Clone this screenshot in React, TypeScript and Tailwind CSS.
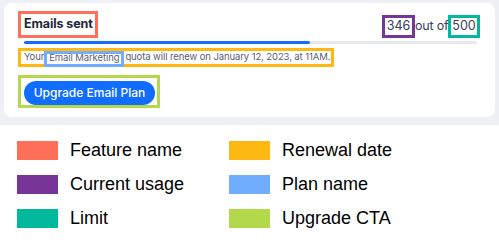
const legend = [
	{ color: 'bg-[#ff6f59]', label: 'Feature name' },
	{ color: 'bg-[#fdb813]', label: 'Renewal date' },
	{ color: 'bg-[#773697]', label: 'Current usage' },
	{ color: 'bg-[#70adff]', label: 'Plan name' },
	{ color: 'bg-[#00b99d]', label: 'Limit' },
	{ color: 'bg-[#b3d84b]', label: 'Upgrade CTA' },
];

export default function App() {
	return (
		<div className="w-[499px] h-[244px] bg-white overflow-hidden">
			<div className="h-[125px] bg-[#eef0f5] pt-[3px] px-[4px] font-['Inter',sans-serif]">
				<div className="h-[114px] w-[491px] rounded-lg bg-white pl-[14px] pr-[15px] pt-[8px]">
					<header className="flex justify-between items-end">
						<span className="h-[27px] w-[80px] flex items-center whitespace-nowrap border-[3px] border-[#ff6f59] pl-[3px] text-[12.5px] font-bold tracking-[-0.1px] text-[#20263a]">
							Emails sent
						</span>
						<div className="flex items-center text-[12.5px] text-[#3b4057]">
							<span className="h-[23px] w-[33px] flex items-center justify-center border-[3px] border-[#773697]">346</span>
							<span className="w-[33px] text-center whitespace-nowrap tracking-[-0.2px]">out of</span>
							<span className="h-[23px] w-[32px] flex items-center justify-center border-[3px] border-[#00b99d]">500</span>
						</div>
					</header>
					<div className="mt-[3px] ml-[6px] mr-[3px] h-[3px] rounded-full bg-[#e7e9ee]">
						<div className="h-full w-[286px] rounded-full bg-[#116dff]" />
					</div>
					<div className="mt-[4px] w-[316px] h-[19px] flex items-center border-[3px] border-[#fdb813] pl-[3px] text-[9.5px] tracking-[-0.1px] text-[#5a6072] whitespace-nowrap">
						Your
						<span className="h-[16px] flex items-center border-[3px] border-[#70adff] px-[2px] mt-[2px] mr-[1px]">Email Marketing</span>
						quota will renew on January 12, 2023, at 11AM.
					</div>
					<div className="mt-[8px] w-[142px] h-[33px] border-[3px] border-[#b3d84b] pl-[3px] pt-[1px]">
						<button className="h-[24px] w-[131px] rounded-full bg-[#116dff] text-white text-[12px] font-medium">
							Upgrade Email Plan
						</button>
					</div>
				</div>
			</div>
			<div className="grid grid-cols-[212px_auto] gap-y-[14px] pl-[17px] pt-[15px] font-['Liberation_Sans',Arial,sans-serif] text-[18px] text-black">
				{legend.map((item) => (
					<div key={item.label} className="flex items-center gap-[12px] h-[20px]">
						<span className={`w-[41px] h-[19px] ${item.color}`} />
						<span>{item.label}</span>
					</div>
				))}
			</div>
		</div>
	);
}
